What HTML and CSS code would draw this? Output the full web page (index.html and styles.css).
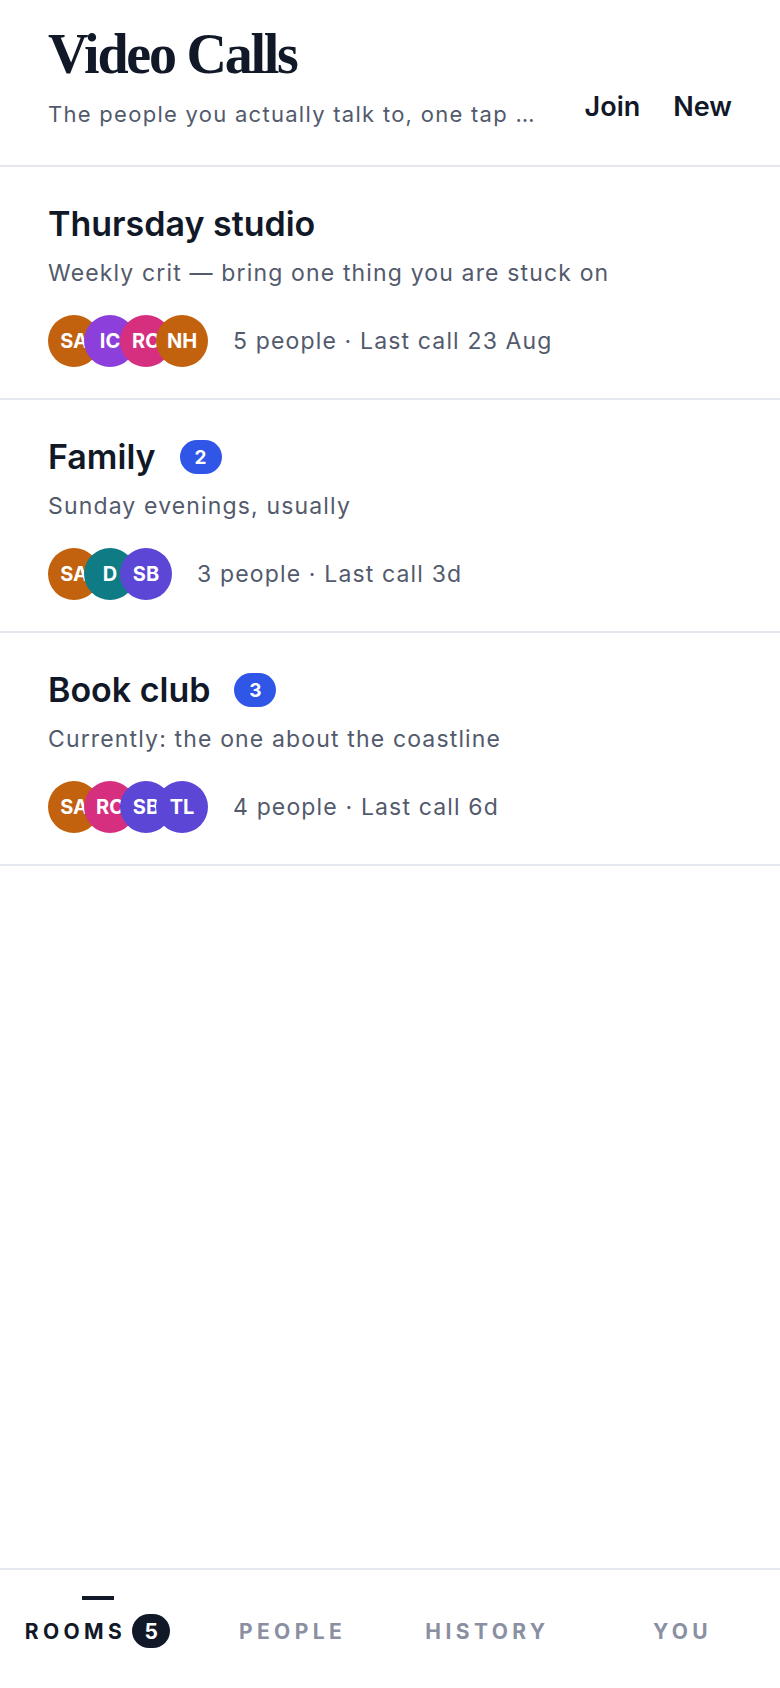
FILE: index.html
```html
<!DOCTYPE html>
<html lang="en">
<head>
    <meta charset="UTF-8">
    <meta name="viewport" content="width=device-width, initial-scale=1.0">
    <title>Video Calls</title>
    <link rel="stylesheet" href="styles.css">
</head>
<body>
    <div class="app">
        <header class="top">
            <div class="top-text">
                <h1 class="top-title">Video Calls</h1>
                <p class="top-sub">The people you actually talk to, one tap away whenever you want them</p>
            </div>
            <div class="top-actions">
                <button class="act">Join</button>
                <button class="act">New</button>
            </div>
        </header>

        <main class="rooms">
            <div class="room">
                <div class="room-head">
                    <h2 class="room-name">Thursday studio</h2>
                </div>
                <p class="room-desc">Weekly crit — bring one thing you are stuck on</p>
                <div class="room-foot">
                    <div class="faces">
                        <span class="face c-amber">SA</span>
                        <span class="face c-purple">IC</span>
                        <span class="face c-pink">RC</span>
                        <span class="face c-amber">NH</span>
                    </div>
                    <span class="room-meta">5 people · Last call 23 Aug</span>
                </div>
            </div>

            <div class="room">
                <div class="room-head">
                    <h2 class="room-name">Family</h2>
                    <span class="unread">2</span>
                </div>
                <p class="room-desc">Sunday evenings, usually</p>
                <div class="room-foot">
                    <div class="faces">
                        <span class="face c-amber">SA</span>
                        <span class="face c-teal">D</span>
                        <span class="face c-violet">SB</span>
                    </div>
                    <span class="room-meta">3 people · Last call 3d</span>
                </div>
            </div>

            <div class="room">
                <div class="room-head">
                    <h2 class="room-name">Book club</h2>
                    <span class="unread">3</span>
                </div>
                <p class="room-desc">Currently: the one about the coastline</p>
                <div class="room-foot">
                    <div class="faces">
                        <span class="face c-amber">SA</span>
                        <span class="face c-pink">RC</span>
                        <span class="face c-violet">SB</span>
                        <span class="face c-violet">TL</span>
                    </div>
                    <span class="room-meta">4 people · Last call 6d</span>
                </div>
            </div>
        </main>

        <nav class="tabs">
            <a class="tab on"><span class="tab-bar"></span><span class="tab-label">Rooms <span class="tab-count">5</span></span></a>
            <a class="tab"><span class="tab-bar"></span><span class="tab-label">People</span></a>
            <a class="tab"><span class="tab-bar"></span><span class="tab-label">History</span></a>
            <a class="tab"><span class="tab-bar"></span><span class="tab-label">You</span></a>
        </nav>
    </div>
</body>
</html>
```

FILE: styles.css
```css
* {
    box-sizing: border-box;
}
body {
    margin: 0;
    background: #fff;
    color: #111827;
    font-family: Inter, "Noto Sans", sans-serif;
}
.app {
    min-height: 100vh;
    display: flex;
    flex-direction: column;
}

/* cabeçalho */
.top {
    display: flex;
    align-items: flex-end;
    gap: 41px;
    padding: 22px 48px 36px;
    border-bottom: 2px solid #e5e7ef;
}
.top-text {
    flex: 1;
    min-width: 0;
}
.top-title {
    margin: 0;
    font-family: "Liberation Serif", "Times New Roman", serif;
    font-size: 56px;
    line-height: 64px;
    font-weight: 700;
    letter-spacing: -0.04em;
}
.top-sub {
    margin: 13px 0 0;
    font-size: 22px;
    line-height: 30px;
    letter-spacing: 0.058em;
    color: #525a6c;
    white-space: nowrap;
    overflow: hidden;
    text-overflow: ellipsis;
}
.top-actions {
    display: flex;
    gap: 33px;
    margin-bottom: 6px;
}
.act {
    border: 0;
    background: none;
    padding: 0;
    font-family: inherit;
    font-size: 27px;
    line-height: 32px;
    font-weight: 600;
    color: #111827;
}

/* lista de salas */
.rooms {
    flex: 1;
}
.room {
    padding: 36px 48px 31px;
    border-bottom: 2px solid #e5e7ef;
}
.room-head {
    display: flex;
    align-items: center;
    gap: 24px;
}
.room-name {
    margin: 0;
    font-size: 34px;
    line-height: 42px;
    font-weight: 600;
}
.unread {
    min-width: 42px;
    height: 34px;
    padding: 0 12px;
    border-radius: 17px;
    background: #3056e8;
    color: #fff;
    font-size: 19px;
    font-weight: 700;
    display: flex;
    align-items: center;
    justify-content: center;
}
.room-desc {
    margin: 13px 0 0;
    font-size: 23px;
    line-height: 30px;
    letter-spacing: 0.05em;
    color: #525a6c;
}
.room-foot {
    display: flex;
    align-items: center;
    gap: 25px;
    margin-top: 27px;
}
.faces {
    display: flex;
}
.face {
    width: 52px;
    height: 52px;
    border-radius: 50%;
    display: flex;
    align-items: center;
    justify-content: center;
    color: #fff;
    font-size: 20px;
    font-weight: 700;
    overflow: hidden;
    white-space: nowrap;
}
.face + .face {
    margin-left: -16px;
}
.c-amber { background: #c2620e; }
.c-purple { background: #8c3fdb; }
.c-pink { background: #d62f80; }
.c-teal { background: #0f7c85; }
.c-violet { background: #5b46d6; }
.room-meta {
    font-size: 23px;
    line-height: 30px;
    letter-spacing: 0.05em;
    color: #525a6c;
}

/* abas de baixo */
.tabs {
    display: grid;
    grid-template-columns: repeat(4, 1fr);
    height: 120px;
    border-top: 2px solid #e5e7ef;
}
.tab {
    display: flex;
    flex-direction: column;
    align-items: center;
    padding-top: 26px;
    color: #8a8fa2;
}
.tab-bar {
    width: 32px;
    height: 4px;
    margin-bottom: 13px;
}
.tab.on {
    color: #111827;
}
.tab.on .tab-bar {
    background: #111827;
}
.tab-label {
    display: flex;
    align-items: center;
    height: 36px;
    font-size: 21px;
    font-weight: 700;
    letter-spacing: 0.21em;
    text-transform: uppercase;
}
.tab-count {
    min-width: 38px;
    height: 34px;
    border-radius: 17px;
    background: #111827;
    color: #fff;
    letter-spacing: 0;
    font-size: 21px;
    display: flex;
    align-items: center;
    justify-content: center;
    margin-left: 6px;
}
```
